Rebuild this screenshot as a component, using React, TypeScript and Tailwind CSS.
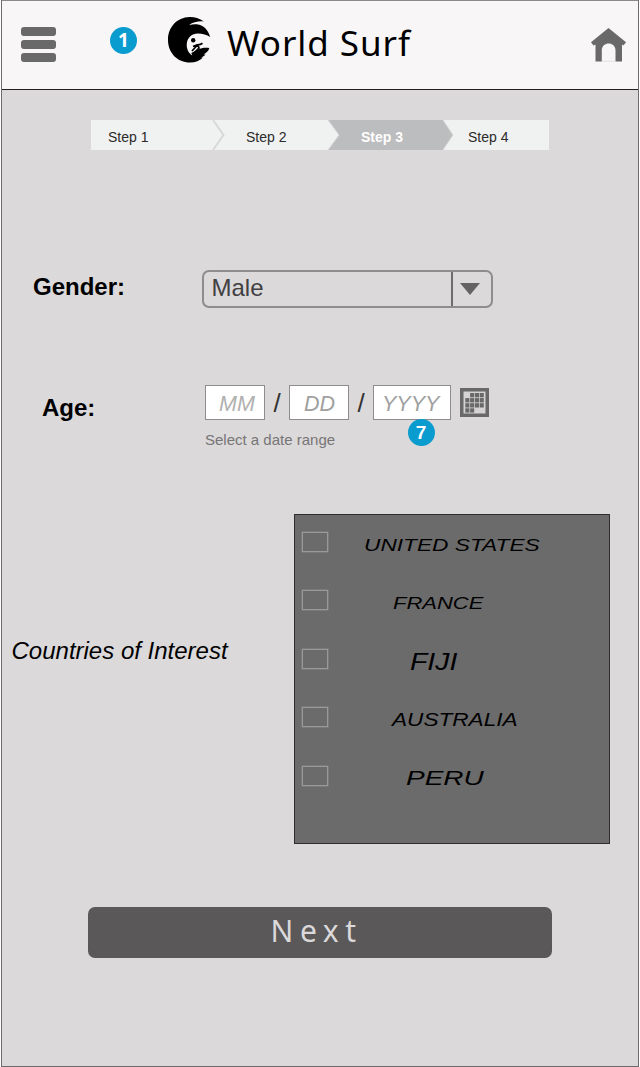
const countries = [
  { name: 'UNITED STATES', style: 'ml-[36px] text-[17.4px] scale-x-[1.305] pt-[5px]' },
  { name: 'FRANCE', style: 'ml-[65px] text-[16.8px] scale-x-[1.31] pt-[6px]' },
  { name: 'FIJI', style: 'ml-[82px] text-[23.3px] scale-x-[1.22] pt-0.5' },
  { name: 'AUSTRALIA', style: 'ml-[64px] text-[18px] scale-x-[1.255] pt-1' },
  { name: 'PERU', style: 'ml-[78px] text-[20px] scale-x-[1.4] pt-[2.5px]' },
];

function WaveLogo() {
  return (
    <svg className="h-[48px] w-[46px] shrink-0" viewBox="0 0 46 48">
      <path
        d="M37 5.500C32 2 27 .8 22.500 1 10 1.500 1 11 1 24s9.500 22.500 22 22.500c5.500 0 10-2 13-5l-2.500.3c2-.8 4-2 5-3.300l-2 .1c2.500-1.600 5.500-4 5.800-6.600-4-.6-8-.2-11 1.500l-7 3.500 1 2.500c-4-2.500-6-7-5.500-12 .6-6 5.200-10 11-10 5 0 9 1.500 12.400 3.500C41 14 37 9.500 31 8.500c-3-.5-6-.2-9 .7 4-3.300 10-4.200 15-3.700Z"
        fill="#000"
      />
      <circle cx="26.200" cy="24.200" r="2.200" fill="#000" />
      <path
        d="M26 30.500l4-1.700c2 .2 3.500 0 5.500-1.500M30.500 29l-5.500 6M31 29.500l1 2.500-3.500 3.500 3.500-.5"
        fill="none"
        stroke="#000"
        strokeWidth="1.700"
      />
    </svg>
  );
}

function Header() {
  return (
    <header className="relative flex h-[90px] shrink-0 items-start border-t border-b border-t-[#8b898a] border-b-[#231f20] bg-[#f8f6f7]">
      <button aria-label="Menu" className="mt-[26px] ml-[19px] flex w-[35px] flex-col gap-1">
        <span className="h-[9px] rounded-[3px] bg-[#696969]" />
        <span className="h-[9px] rounded-[3px] bg-[#696969]" />
        <span className="h-[9px] rounded-[3px] bg-[#696969]" />
      </button>
      <span className="absolute top-[26px] left-[108px] flex size-[27px] items-center justify-center rounded-full bg-[#0a9bcf] font-['Noto_Sans',sans-serif] text-[19px] leading-none font-bold text-white">
        1
      </span>
      <div className="ml-[111px] flex items-start pt-[15px]">
        <WaveLogo />
      </div>
      <h1 className="mt-[24px] ml-[14px] font-['Noto_Sans',sans-serif] text-[35px] leading-none tracking-[0.95px] whitespace-nowrap text-black">
        World Surf
      </h1>
      <svg className="mt-[27px] mr-[12.500px] ml-auto h-[34px] w-[35px] shrink-0" viewBox="0 0 35 34">
        <path
          d="M17.500 0 35 14.200 32.500 17.500 31 16.500V33.500H24.500V22.500C24.500 13.300 10.800 13.300 10.800 22.500V33.500H4.500V16.500L2.500 17.500 0 14.200Z"
          fill="#696969"
        />
        <path d="M10.800 33.300h13.700" stroke="#d2d1d1" strokeWidth=".6" />
      </svg>
    </header>
  );
}

function Steps() {
  return (
    <nav className="relative mt-[30px] ml-[89px] flex h-[30px] w-[458px] shrink-0 pt-[10px] text-sm leading-none text-[#2b2b2b]">
      <svg className="absolute inset-0 h-[30px] w-[458px]" viewBox="0 0 458 30">
        <path d="M0 0H458V30H0Z" fill="#f0f1f1" />
        <path d="M237 0H352L362 15 352 30H237L248 15Z" fill="#bcbdbe" />
        <path d="M122 0 132.500 15 122 30" fill="none" stroke="#d9d8d9" strokeWidth="2" />
        <path d="M237 0 248 15 237 30M352 0 362 15 352 30" fill="none" stroke="#d9d9d9" strokeWidth="1" />
      </svg>
      <span className="relative ml-[17px] w-[138px]">Step 1</span>
      <span className="relative w-[115px]">Step 2</span>
      <span className="relative w-[107px] font-bold text-white">Step 3</span>
      <span className="relative">Step 4</span>
    </nav>
  );
}

function CalendarIcon() {
  const cells = [1, 2, 3, 4, 5, 6, 7, 8, 9, 10, 11, 12, 13];
  return (
    <svg className="mt-[3px] ml-[9px] size-[29px]" viewBox="0 0 29 29">
      <path d="M0 0H29V29H0Z" fill="#696969" />
      <path d="M3.500 3.500H25.500V25.500H3.500Z" fill="#d5d3d4" />
      {cells.map((n) => (
        <rect
          key={n}
          x={5.3 + (n % 4) * 4.8}
          y={5 + Math.floor(n / 4) * 5.1}
          width="4.100"
          height="4.300"
          fill="#696969"
        />
      ))}
    </svg>
  );
}

export default function App() {
  return (
    <div className="h-[1067px] w-[640px] bg-white pr-px pl-px font-['Liberation_Sans',Arial,sans-serif]">
      <main className="flex h-[1067px] flex-col border-r border-b border-l border-[#6d6b6c] bg-[#dbd9da]">
        <Header />
        <Steps />

        <section className="mt-[120px] flex h-[38px] shrink-0 items-start">
          <h2 className="w-[200px] pt-[5px] pl-[31px] text-[24px] leading-none font-bold text-black">Gender:</h2>
          <button className="flex h-[38px] w-[291px] items-stretch rounded-[7px] border-2 border-[#8e8c8d] text-left">
            <span className="w-[246.500px] pt-[4px] pl-[7.500px] text-[24px] leading-none text-[#414042]">Male</span>
            <span className="flex flex-1 items-center border-l-2 border-[#6d6b6c] pl-[7px]">
              <svg className="h-3 w-5" viewBox="0 0 20 12">
                <path d="M0 0H20L10 12Z" fill="#636363" />
              </svg>
            </span>
          </button>
        </section>

        <section className="mt-[77px] flex h-[65px] shrink-0 items-start">
          <h2 className="w-[203px] pt-[11px] pl-10 text-[24px] leading-none font-bold text-black">Age:</h2>
          <div>
            <div className="relative flex h-[35px] items-start text-[21.5px] leading-none text-[#a0a0a0] italic">
              <span className="h-[35px] w-[60px] border-[1.500px] border-[#8e8c8d] bg-white pt-2 pl-[13px] text-[#b0b0b0]">MM</span>
              <span className="w-6 pt-[5px] text-center text-[26px] leading-none text-[#333] not-italic">/</span>
              <span className="h-[35px] w-[60px] border-[1.500px] border-[#8e8c8d] bg-white pt-2 pl-[14px]">DD</span>
              <span className="w-6 pt-[5px] text-center text-[26px] leading-none text-[#333] not-italic">/</span>
              <span className="h-[35px] w-[78px] border-[1.500px] border-[#8e8c8d] bg-white pt-2 pl-[8px]">YYYY</span>
              <CalendarIcon />
              <span className="absolute top-[34px] left-[202.500px] flex size-[27px] items-center justify-center rounded-full bg-[#0a9bcf] text-[19px] leading-none font-bold text-white not-italic">
                7
              </span>
            </div>
            <p className="mt-3 text-[15px] leading-none text-[#777576]">Select a date range</p>
          </div>
        </section>

        <section className="mt-16 flex h-[330px] shrink-0 items-start">
          <h2 className="w-[292px] pt-[125px] pl-[9.500px] text-[24px] leading-none text-black italic">
            Countries of Interest
          </h2>
          <ul className="h-[330px] w-[316px] border border-[#302d2e] bg-[#6b6b6b] pt-[17px] pl-[7px]">
            {countries.map(({ name, style }) => (
              <li key={name} className="flex h-[58.400px] items-start">
                <span className="h-5 w-[26px] border-[1.500px] border-[#999] bg-transparent shadow-[0_0_0_0.5px_#888]" />
                <span className={`origin-left leading-none whitespace-nowrap text-black italic ${style}`}>{name}</span>
              </li>
            ))}
          </ul>
        </section>

        <button className="mt-[63px] ml-[86px] flex h-[51px] w-[464px] shrink-0 items-start rounded-[7px] bg-[#5a5859] pt-[9px] pl-[182.500px] font-['Noto_Sans',sans-serif] text-[30px] leading-none tracking-[6.6px] text-[#dbd9da]">
          Next
        </button>
      </main>
    </div>
  );
}
